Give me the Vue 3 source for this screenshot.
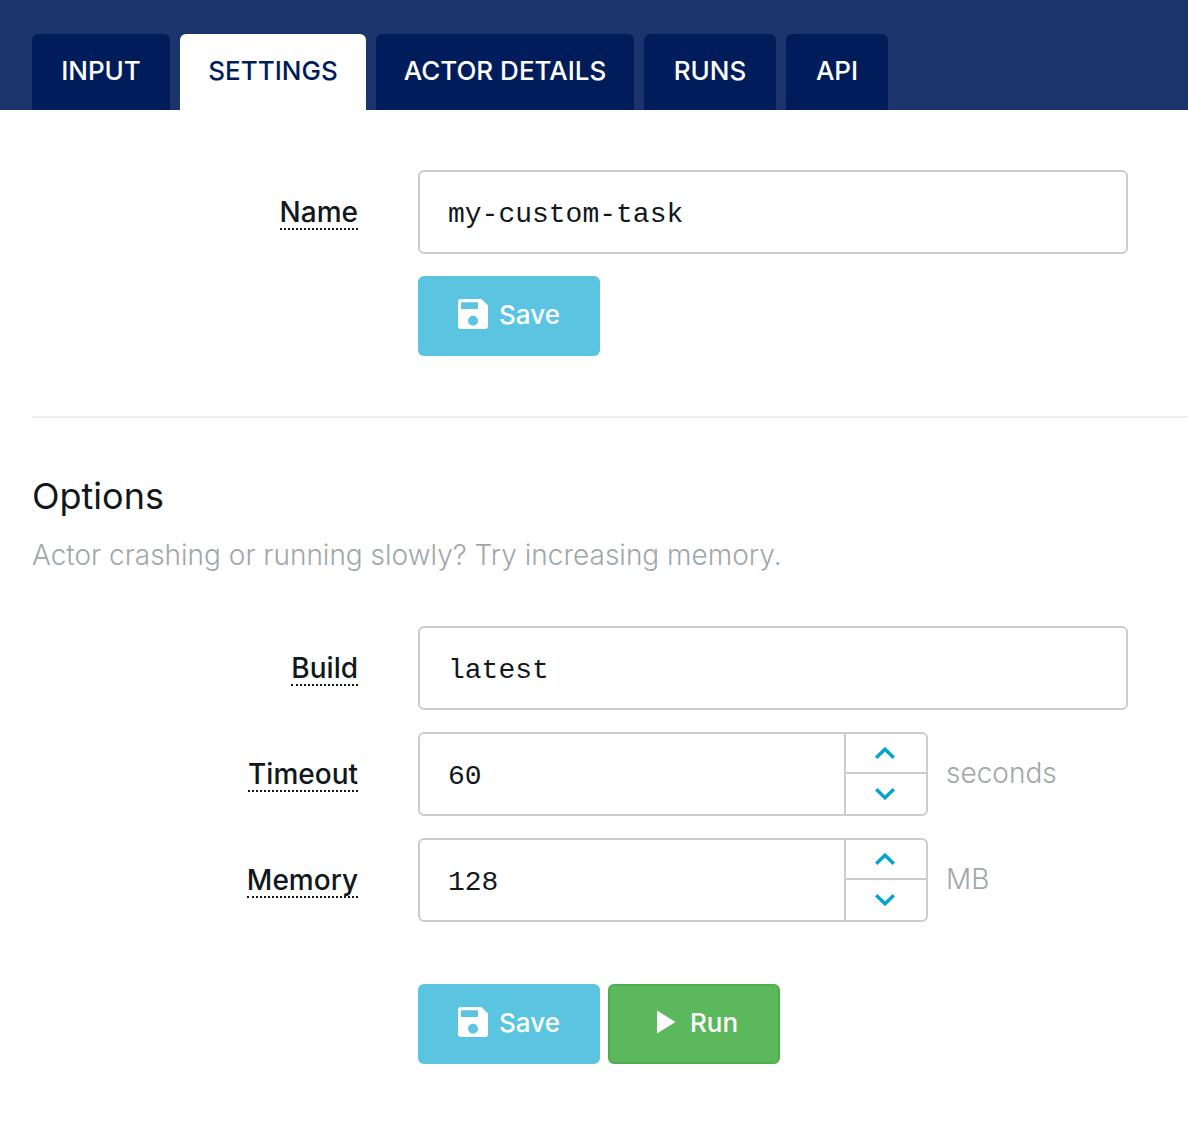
<script setup>
import { ref } from 'vue'

const tabs = ['INPUT', 'SETTINGS', 'ACTOR DETAILS', 'RUNS', 'API']
const active = ref('SETTINGS')
const name = ref('my-custom-task')
const build = ref('latest')

const limits = ref([
  { id: 'timeout', label: 'Timeout', value: 60, unit: 'seconds', step: 1 },
  { id: 'memory', label: 'Memory', value: 128, unit: 'MB', step: 128 },
])

function change(field, direction) {
  field.value = Math.max(0, Number(field.value) + direction * field.step)
}
</script>

<template>
  <div class="page">
    <nav class="tabs" role="tablist">
      <button
        v-for="tab in tabs"
        :key="tab"
        type="button"
        role="tab"
        class="tab"
        :class="{ active: tab === active }"
        :aria-selected="tab === active"
        @click="active = tab"
      >{{ tab }}</button>
    </nav>

    <main>
      <form class="section" @submit.prevent>
        <div class="row">
          <label for="name"><span class="term">Name</span></label>
          <input id="name" v-model="name" class="box" type="text" spellcheck="false" />
        </div>
        <div class="actions">
          <button class="btn save" type="submit">
            <svg width="30" height="30" viewBox="0 0 30 30" aria-hidden="true">
              <path fill="currentColor" fill-rule="evenodd" d="M3 0H23.500L30 6.500V27a3 3 0 0 1-3 3H3a3 3 0 0 1-3-3V3a3 3 0 0 1 3-3zM3 3.300V10H20V3.300zM15 16.700a5 5 0 1 0 0 10a5 5 0 1 0 0-10z" />
            </svg>
            <span>Save</span>
          </button>
        </div>
      </form>

      <hr />

      <form class="section options" @submit.prevent>
        <h2>Options</h2>
        <p class="hint">Actor crashing or running slowly? Try increasing memory.</p>
        <div class="row">
          <label for="build"><span class="term">Build</span></label>
          <input id="build" v-model="build" class="box" type="text" spellcheck="false" />
        </div>
        <div v-for="field in limits" :key="field.id" class="row">
          <label :for="field.id"><span class="term">{{ field.label }}</span></label>
          <div class="measure">
            <div class="box stepper">
              <input :id="field.id" v-model="field.value" type="number" min="0" />
              <div class="arrows">
                <button type="button" :aria-label="`Increase ${field.label}`" @click="change(field, 1)">
                  <svg width="20" height="12" viewBox="0 0 20 12" aria-hidden="true">
                    <path d="M1.200 10.700L10 2.200L18.800 10.700" fill="none" stroke="currentColor" stroke-width="3.400" />
                  </svg>
                </button>
                <button type="button" :aria-label="`Decrease ${field.label}`" @click="change(field, -1)">
                  <svg width="20" height="12" viewBox="0 0 20 12" aria-hidden="true">
                    <path d="M1.200 1.300L10 9.800L18.800 1.300" fill="none" stroke="currentColor" stroke-width="3.400" />
                  </svg>
                </button>
              </div>
            </div>
            <span class="unit">{{ field.unit }}</span>
          </div>
        </div>
        <div class="actions">
          <button class="btn save" type="submit">
            <svg width="30" height="30" viewBox="0 0 30 30" aria-hidden="true">
              <path fill="currentColor" fill-rule="evenodd" d="M3 0H23.500L30 6.500V27a3 3 0 0 1-3 3H3a3 3 0 0 1-3-3V3a3 3 0 0 1 3-3zM3 3.300V10H20V3.300zM15 16.700a5 5 0 1 0 0 10a5 5 0 1 0 0-10z" />
            </svg>
            <span>Save</span>
          </button>
          <button class="btn run" type="button">
            <svg width="20" height="24" viewBox="0 0 20 24" aria-hidden="true">
              <path fill="currentColor" d="M1 .500L19.500 12L1 23.500z" />
            </svg>
            <span>Run</span>
          </button>
        </div>
      </form>
    </main>
  </div>
</template>

<style>
body {
  margin: 0;
  background: #fff;
}
</style>

<style scoped>
.page {
  color: #11181c;
  font-family: Inter, "Liberation Sans", sans-serif;
  font-size: 28px;
}

button,
input {
  box-sizing: border-box;
  margin: 0;
  padding: 0;
  border: 0;
  font: inherit;
  color: inherit;
}

button {
  cursor: pointer;
}

.tabs {
  display: grid;
  grid-template-columns: 138px 186px 258px 132px 102px;
  gap: 10px;
  padding: 34px 32px 0;
  background: #1b346c;
}

.tab {
  height: 76px;
  padding-bottom: 4px;
  border-radius: 6px 6px 0 0;
  background: #001c5b;
  color: #fff;
  font-size: 26px;
  font-weight: 500;
  white-space: nowrap;
}

.tab.active {
  background: #fff;
  color: #001c5b;
}

.section {
  display: flex;
  flex-direction: column;
  gap: 22px;
  padding: 60px 60px 60px 32px;
}

.section.options {
  padding-top: 58px;
}

.row {
  display: grid;
  grid-template-columns: 326px minmax(0, 1fr);
  column-gap: 60px;
}

label {
  padding-top: 25px;
  text-align: right;
}

.term {
  display: inline-block;
  border-bottom: 2px dotted #11181c;
  font-weight: 500;
  line-height: 32px;
}

.box {
  box-sizing: border-box;
  height: 84px;
  border: 2px solid #ccc;
  border-radius: 6px;
  background: #fff;
}

input {
  width: 100%;
  padding: 4px 28px 0;
  font-family: "Liberation Mono", monospace;
}

input[type="number"] {
  appearance: textfield;
  background: none;
}

input[type="number"]::-webkit-inner-spin-button {
  display: none;
}

.measure {
  display: flex;
  align-items: center;
  gap: 18px;
}

.stepper {
  display: flex;
  width: 510px;
}

.stepper input {
  flex: 1;
  min-width: 0;
}

.arrows {
  display: grid;
  grid-template-rows: 38px 42px;
  width: 82px;
  border-left: 2px solid #ccc;
  box-sizing: border-box;
}

.arrows button {
  display: flex;
  align-items: center;
  justify-content: center;
  padding-right: 2px;
  background: none;
  color: #00a5d2;
}

.arrows button + button {
  border-top: 2px solid #ccc;
}

.unit,
.hint {
  color: #a1a7ab;
  font-weight: 300;
}

.unit {
  padding-bottom: 2px;
}

.actions {
  display: flex;
  gap: 8px;
  padding-left: 386px;
}

.btn {
  display: flex;
  align-items: center;
  justify-content: center;
  gap: 11px;
  height: 80px;
  padding-bottom: 4px;
  border-radius: 6px;
  color: #fff;
  font-size: 26px;
  font-weight: 500;
}

.save {
  width: 182px;
  background: #5bc5e1;
}

.run {
  gap: 14px;
  width: 172px;
  padding-left: 6px;
  border: 2px solid #4cae4c;
  background: #5cb85c;
}

hr {
  height: 2px;
  margin: 0 0 0 32px;
  border: 0;
  background: #eee;
}

h2 {
  margin: 0;
  font-size: 36px;
  font-weight: 400;
  line-height: 40px;
}

.hint {
  margin: 0 0 32px;
  line-height: 34px;
}

.options .actions {
  margin-top: 40px;
}
</style>
